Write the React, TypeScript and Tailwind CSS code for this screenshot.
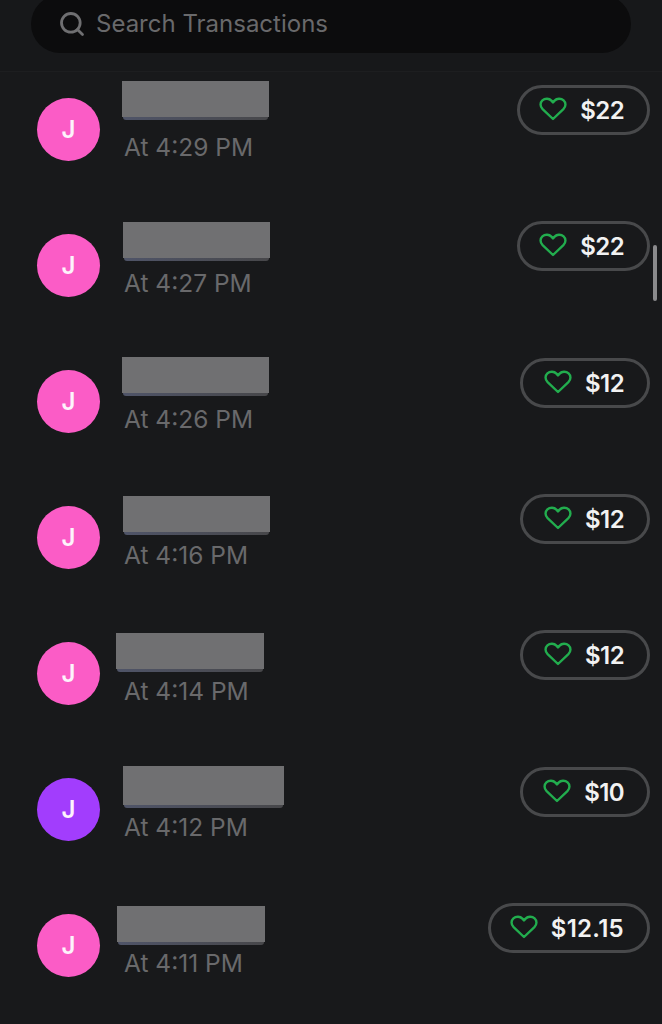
import { Search } from "lucide-react"

type Transaction = {
  time: string
  amount: string
  avatar: string
  nameBox: string
  pill: string
}

const transactions: Transaction[] = [
  { time: "At 4:29 PM", amount: "$22", avatar: "bg-[#fb5cc6]", nameBox: "ml-[23px] mt-[9px] w-[147px] h-[39px]", pill: "mt-[13px] w-[133px] tracking-[-0.6px]" },
  { time: "At 4:27 PM", amount: "$22", avatar: "bg-[#fb5cc6]", nameBox: "ml-[24px] mt-[14px] w-[147px] h-[39px]", pill: "mt-[13px] w-[133px] tracking-[-0.6px]" },
  { time: "At 4:26 PM", amount: "$12", avatar: "bg-[#fb5cc6]", nameBox: "ml-[23px] mt-[13px] w-[147px] h-[39px]", pill: "mt-[14px] w-[130px] tracking-[-0.6px]" },
  { time: "At 4:16 PM", amount: "$12", avatar: "bg-[#fb5cc6]", nameBox: "ml-[24px] mt-[16px] w-[147px] h-[39px]", pill: "mt-[14px] w-[130px] tracking-[-0.6px]" },
  { time: "At 4:14 PM", amount: "$12", avatar: "bg-[#fb5cc6]", nameBox: "ml-[17px] mt-[17px] w-[148px] h-[39px]", pill: "mt-[14px] w-[130px] tracking-[-0.6px]" },
  { time: "At 4:12 PM", amount: "$10", avatar: "bg-[#a23dfd]", nameBox: "ml-[24px] mt-[14px] w-[161px] h-[42px]", pill: "mt-[15px] w-[130px] tracking-[-0.6px]" },
  { time: "At 4:11 PM", amount: "$12.15", avatar: "bg-[#fb5cc6]", nameBox: "ml-[18px] mt-[18px] w-[148px] h-[39px]", pill: "mt-[15px] w-[162px] tracking-[0.3px]" },
]

const HeartIcon = () => (
  <svg width="28" height="24" viewBox="0 0 28 24" fill="none" className="shrink-0 -mt-[3px]">
    <path
      d="M14 22 L3.6 12.2 C0.8 9.4 1 5.6 3.4 3.4 C6 1 10.2 1.2 12.4 3.6 L14 5.4 L15.6 3.6 C17.8 1.2 22 1 24.6 3.4 C27 5.6 27.2 9.4 24.4 12.2 Z"
      stroke="#22ad4e"
      strokeWidth="2.4"
      strokeLinejoin="round"
    />
  </svg>
)

const TransactionRow = ({ item }: { item: Transaction }) => (
  <div className="flex h-[136px] items-start">
    <div
      className={`${item.avatar} ml-[37px] mt-[26px] flex h-[63px] w-[63px] shrink-0 items-center justify-center rounded-full text-[24px] font-semibold text-[#fdf3fb]`}
    >
      J
    </div>
    <div className="-ml-[1px] flex flex-col">
      <div className="h-[62px]">
        <div className={`${item.nameBox} flex flex-col`}>
          <div className="flex-1 bg-[#707072] blur-[0.5px]" />
          <div className="mx-[1px] h-[3px] rounded-b-[3px] bg-gradient-to-r from-[#4f5468] to-[#47474a]" />
        </div>
      </div>
      <span className="ml-[25px] text-[24.5px] leading-[26px] text-[#69696b]">{item.time}</span>
    </div>
    <div
      className={`${item.pill} ml-auto mr-[12px] flex h-[50px] items-center justify-end gap-[13px] rounded-full border-[3px] border-[#48494b] pr-[23px]`}
    >
      <HeartIcon />
      <span className="pt-[2px] text-[24px] font-semibold text-[#f2f2f2]">{item.amount}</span>
    </div>
  </div>
)

export default function App() {
  return (
    <div className="relative h-[1024px] w-[662px] overflow-hidden bg-[#18191b] font-['Inter',sans-serif]">
      <header className="h-[72px] border-b border-[#1d1e20] bg-[#17181a]">
        <div className="mx-[31px] flex h-[58px] -translate-y-[5px] items-center gap-[10px] rounded-full bg-[#0c0c0d] pl-[27px]">
          <Search size={28} strokeWidth={2.4} className="text-[#6f6f71]" />
          <span className="text-[24px] text-[#69696b]">Search Transactions</span>
        </div>
      </header>
      <main>
        {transactions.map((item) => (
          <TransactionRow key={item.time} item={item} />
        ))}
      </main>
      {/* scroll indicator floats over the list */}
      <div className="absolute left-[653px] top-[245px] h-[56px] w-[4px] rounded-full bg-[#8a8a8c]" />
    </div>
  )
}
